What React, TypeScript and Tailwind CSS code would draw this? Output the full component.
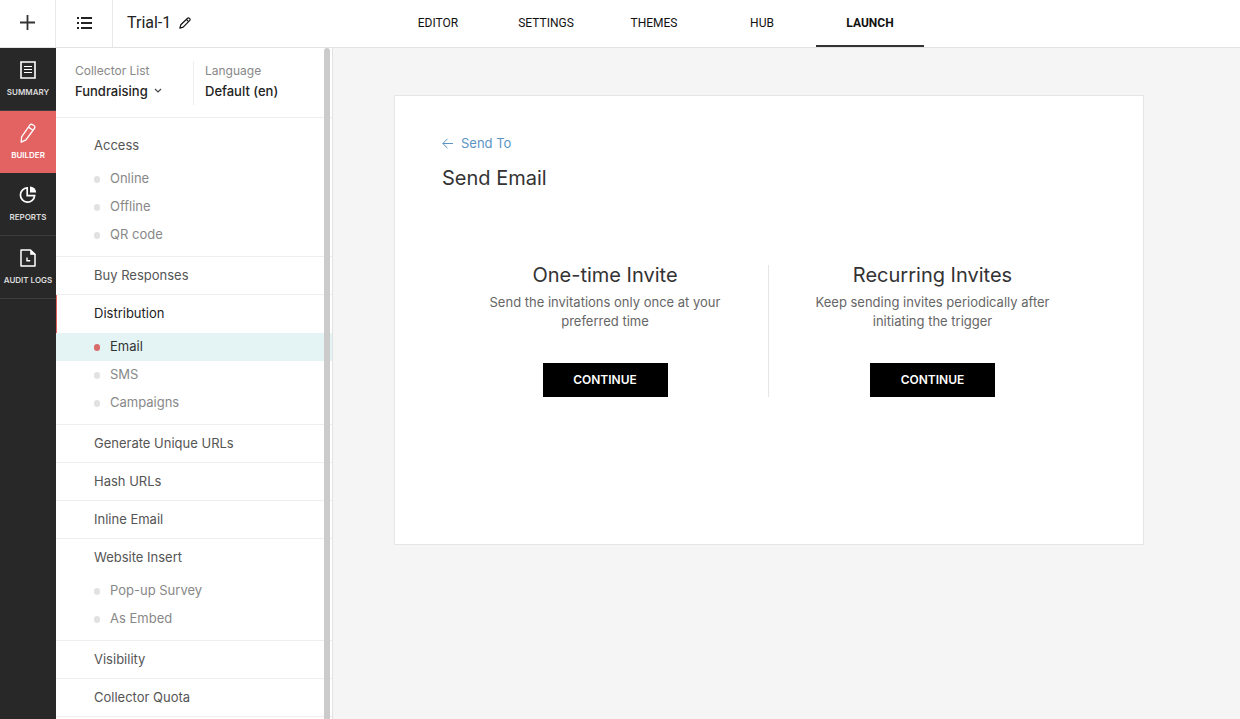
import type { ReactNode } from 'react';

type Section = {
  title: string;
  active?: boolean;
  items?: string[];
};

const tabs = ['EDITOR', 'SETTINGS', 'THEMES', 'HUB', 'LAUNCH'];

const sections: Section[] = [
  { title: 'Access', items: ['Online', 'Offline', 'QR code'] },
  { title: 'Buy Responses' },
  { title: 'Distribution', active: true, items: ['Email', 'SMS', 'Campaigns'] },
  { title: 'Generate Unique URLs' },
  { title: 'Hash URLs' },
  { title: 'Inline Email' },
  { title: 'Website Insert', items: ['Pop-up Survey', 'As Embed'] },
  { title: 'Visibility' },
  { title: 'Collector Quota' },
];

const PlusIcon = () => (
  <svg width="15" height="15" viewBox="0 0 15 15" fill="none" stroke="#333" strokeWidth="1.8">
    <path d="M7.5 0v15M0 7.5h15" />
  </svg>
);

const ListIcon = () => (
  <svg width="15" height="12" viewBox="0 0 15 12" fill="#222">
    <path d="M0 0h2v2H0zM0 5h2v2H0zM0 10h2v2H0zM4 0h11v2H4zM4 5h11v2H4zM4 10h11v2H4z" />
  </svg>
);

const RenameIcon = () => (
  <svg
    width="12"
    height="12"
    viewBox="0 0 12 12"
    fill="none"
    stroke="#111"
    strokeWidth="1.2"
    strokeLinejoin="round"
  >
    <path d="M1.8 7.8 8.6 1.2c1.2-1 3.2.8 2.2 2.2L4.2 10.2.8 11.2z" />
    <path d="M7.4 2.4l2.2 2.2" />
  </svg>
);

const SummaryIcon = () => (
  <svg width="16" height="18" viewBox="0 0 16 18" fill="none" stroke="white">
    <path d="M1 1h14v16H1z" strokeWidth="1.6" />
    <path d="M4 5.5h8M4 8.5h8M4 11.5h8" strokeWidth="1.2" />
  </svg>
);

const BuilderIcon = () => (
  <svg
    width="16"
    height="20"
    viewBox="0 0 16 20"
    fill="none"
    stroke="white"
    strokeWidth="1.3"
    strokeLinejoin="round"
  >
    <path d="M1.6 13.8 10 1.8c1.2-1.6 5.8 1.2 4.7 3.2L6 16.8l-4.8 2.4z" />
    <path d="M8.4 4.1l4.6 3.2" />
  </svg>
);

const ReportsIcon = () => (
  <svg width="18" height="18" viewBox="0 0 18 18" fill="none" stroke="white">
    <path d="M8.2 1.9A7.1 7.1 0 1 0 15.6 9.6H8.2z" strokeWidth="1.7" />
    <path d="M11 0.6v6h6.2a6.2 6.2 0 0 0-6.2-6z" fill="white" stroke="none" />
  </svg>
);

const AuditIcon = () => (
  <svg width="16" height="18" viewBox="0 0 16 18" fill="none" stroke="white">
    <path d="M1 1h9.4L15 5.4V17H1z" strokeWidth="1.5" strokeLinejoin="round" />
    <path d="M10.5 1v4.5H15z" fill="white" strokeWidth="0.6" />
    <path d="M7 8.5v3.2h3.2" strokeWidth="1.4" />
  </svg>
);

const RailItem = ({
  label,
  active,
  children,
}: {
  label: string;
  active?: boolean;
  children: ReactNode;
}) => (
  <a
    href="#"
    className={`flex flex-col items-center whitespace-nowrap border-b pt-3 text-[8px] font-semibold leading-3 ${
      active
        ? 'h-[62px] border-[#e36363] bg-[#e36363] text-white'
        : 'h-[63px] border-[#3d3d3d] text-[#dcdcdc]'
    }`}
  >
    <span className="mb-1.5 flex h-5 items-center">{children}</span>
    {label}
  </a>
);

const Invite = ({ title, text }: { title: string; text: string }) => (
  <div className="flex flex-col items-center text-center">
    <h2 className="text-xl leading-5 text-[#333]">{title}</h2>
    <p className="mt-2 max-w-[250px] leading-[19px] text-[#666]">{text}</p>
    <button
      type="button"
      className="mt-8 h-[34px] w-[125px] bg-black text-xs font-semibold text-white"
    >
      CONTINUE
    </button>
  </div>
);

const App = () => {
  return (
    <div className="flex h-screen flex-col overflow-hidden bg-[#f5f5f5] font-['Inter','Liberation_Sans',sans-serif] text-[13px]">
      <header className="flex h-12 shrink-0 border-b border-[#e3e3e3] bg-white font-['Roboto','Liberation_Sans',sans-serif]">
        <div className="flex w-96 shrink-0">
          <button
            type="button"
            aria-label="Create"
            className="flex w-14 items-center justify-center border-r border-[#e8e8e8] pb-0.5"
          >
            <PlusIcon />
          </button>
          <button
            type="button"
            aria-label="Surveys"
            className="flex w-[57px] items-center justify-center border-r border-[#e8e8e8] pb-0.5"
          >
            <ListIcon />
          </button>
          <div className="flex items-center gap-2 pb-px pl-3.5 text-base text-[#222]">
            Trial-1
            <button type="button" aria-label="Rename">
              <RenameIcon />
            </button>
          </div>
        </div>
        <nav className="flex">
          {tabs.map((tab) => (
            <a
              key={tab}
              href="#"
              className={`flex w-27 items-center justify-center border-b-2 text-xs text-[#111] ${
                tab === 'LAUNCH' ? 'border-[#333] font-bold' : 'border-transparent'
              }`}
            >
              {tab}
            </a>
          ))}
        </nav>
      </header>

      <div className="flex min-h-0 flex-1">
        {/* Dark rail */}
        <aside className="w-14 shrink-0 bg-[#282828]">
          <RailItem label="SUMMARY">
            <SummaryIcon />
          </RailItem>
          <RailItem label="BUILDER" active>
            <BuilderIcon />
          </RailItem>
          <RailItem label="REPORTS">
            <ReportsIcon />
          </RailItem>
          <RailItem label="AUDIT LOGS">
            <AuditIcon />
          </RailItem>
        </aside>

        {/* Collector panel */}
        <aside className="relative w-[277px] shrink-0 overflow-hidden border-r border-[#e3e3e3] bg-white">
          <div className="flex h-[70px] items-center border-b border-[#eee] pl-[19px]">
            <div className="flex h-11 w-[119px] flex-col border-r border-[#eee]">
              <label htmlFor="collector" className="text-xs leading-5 text-[#888]">
                Collector List
              </label>
              <div className="flex items-center">
                <select
                  id="collector"
                  className="field-sizing-content appearance-none leading-[21px] font-medium text-[#222]"
                >
                  <option>Fundraising</option>
                </select>
                <svg
                  className="ml-1.5"
                  width="8"
                  height="6"
                  viewBox="0 0 8 6"
                  fill="none"
                  stroke="#444"
                  strokeWidth="1.2"
                >
                  <path d="M1 1l3 3 3-3" />
                </svg>
              </div>
            </div>
            <div className="flex h-11 flex-col pl-[11px]">
              <span className="text-xs leading-5 text-[#888]">Language</span>
              <span className="leading-[21px] font-medium text-[#222]">Default (en)</span>
            </div>
          </div>

          {sections.map(({ title, active, items }, i) => (
            <section key={title} className={`border-b border-[#eee] ${i === 0 ? 'pt-[9px]' : ''}`}>
              <a
                href="#"
                className={`flex items-center border-l pl-[37px] ${items ? 'h-[38px]' : 'h-[37px]'} ${
                  active ? 'border-[#e36363] text-[#222]' : 'border-transparent text-[#555]'
                }`}
              >
                {title}
              </a>
              {items && (
                <ul className="pb-[7px]">
                  {items.map((item) => (
                    <li key={item}>
                      <a
                        href="#"
                        className={`flex h-7 items-center gap-2.5 pl-[38px] ${
                          item === 'Email' ? 'bg-[#e4f4f5] text-[#333]' : 'text-[#888]'
                        }`}
                      >
                        <span
                          className={`h-[7px] w-1.5 rounded-full ${
                            item === 'Email' ? 'bg-[#d96b6b]' : 'bg-[#e2e2e2]'
                          }`}
                        />
                        {item}
                      </a>
                    </li>
                  ))}
                </ul>
              )}
            </section>
          ))}

          {/* Scrollbar thumb over the panel */}
          <div className="absolute top-0 right-0.5 h-full w-1.5 rounded-t-full bg-[#cbcbcb]" />
        </aside>

        <main className="min-w-0 flex-1 pt-[47px] pr-24 pl-[61px]">
          <div className="min-h-[450px] border border-[#e6e6e6] bg-white px-[47px] pt-[37px]">
            <a href="#" className="flex items-center gap-2 leading-5 text-[#5c94c4]">
              <svg width="11" height="11" viewBox="0 0 11 11" fill="none" stroke="currentColor">
                <path d="M11 5.5H0.8M5.5 0.8L0.8 5.5l4.7 4.7" />
              </svg>
              Send To
            </a>
            <h1 className="mt-[11px] text-xl leading-7 text-[#333]">Send Email</h1>
            <div className="mt-[73px] grid grid-cols-2 divide-x divide-[#e6e6e6]">
              <Invite
                title="One-time Invite"
                text="Send the invitations only once at your preferred time"
              />
              <Invite
                title="Recurring Invites"
                text="Keep sending invites periodically after initiating the trigger"
              />
            </div>
          </div>
        </main>
      </div>
    </div>
  );
};

export default App;
